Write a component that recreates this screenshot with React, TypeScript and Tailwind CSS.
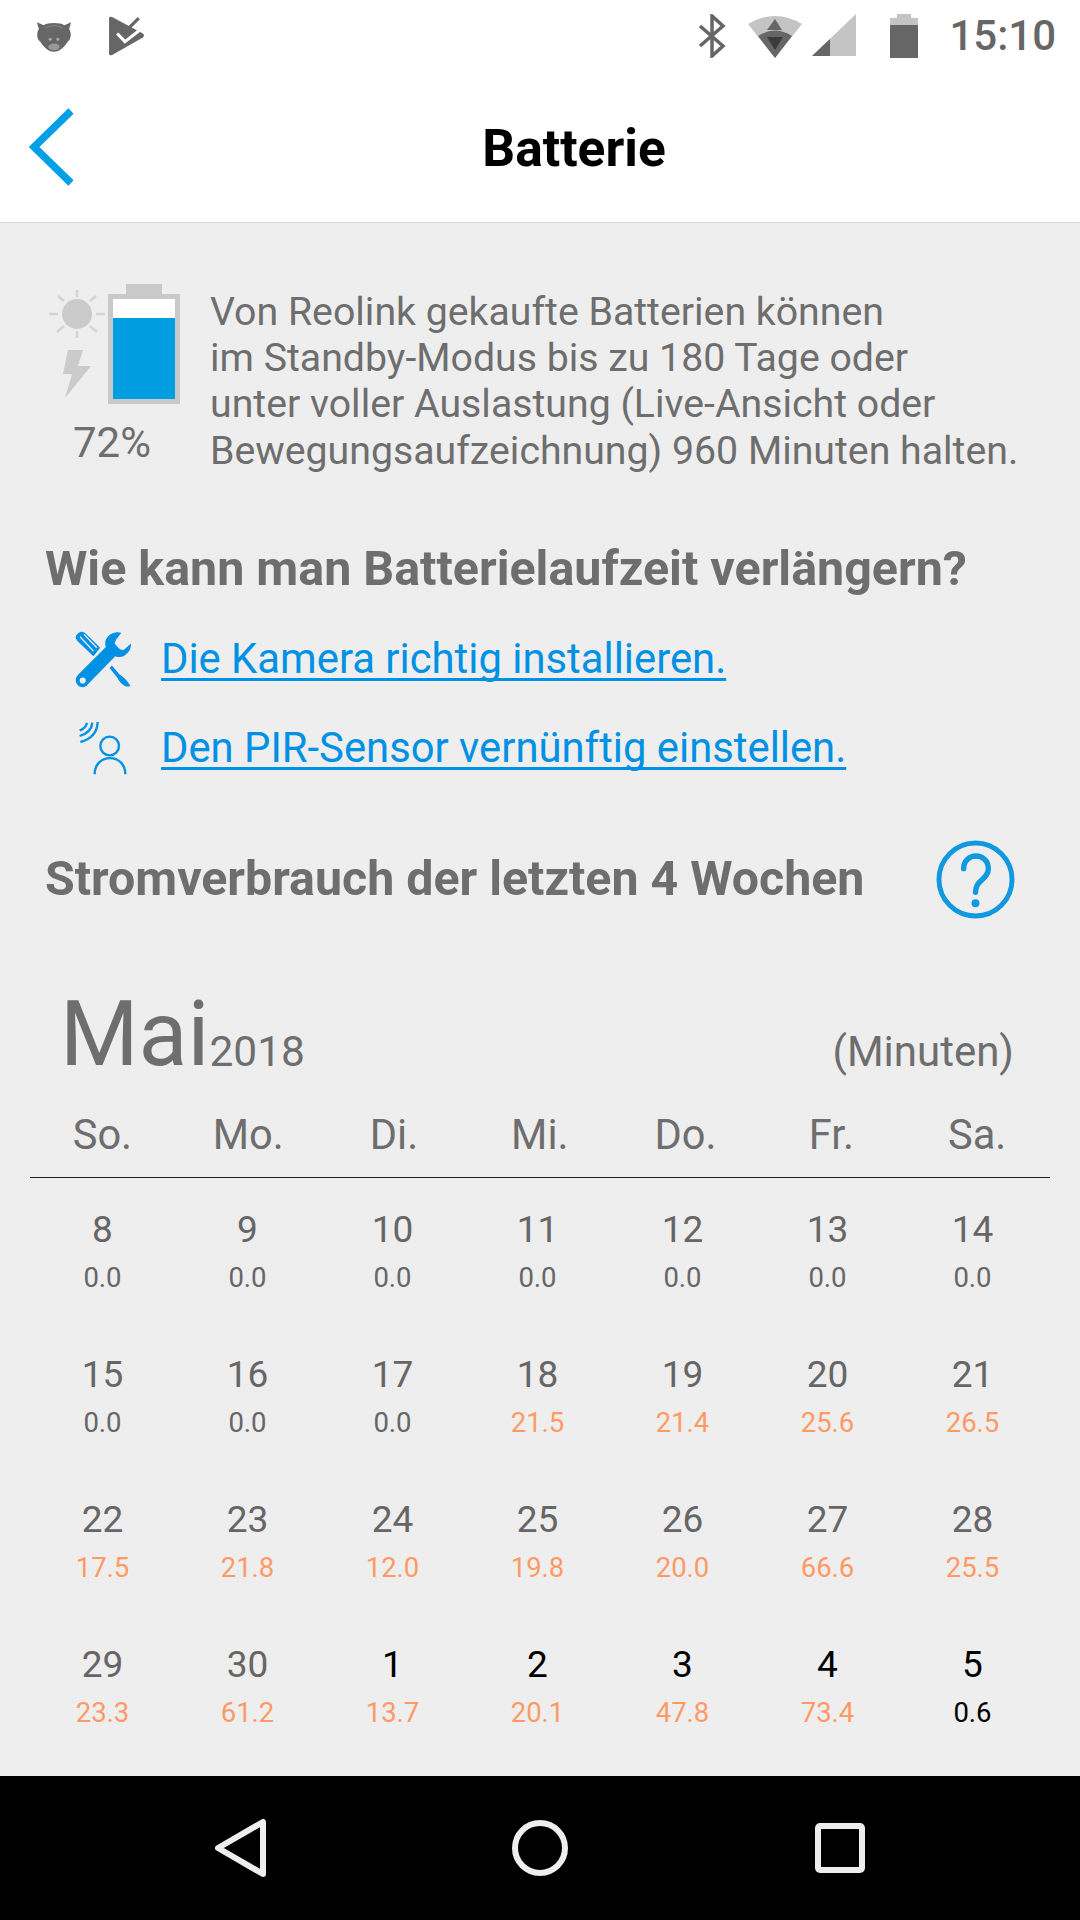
const weekDays = ['So.', 'Mo.', 'Di.', 'Mi.', 'Do.', 'Fr.', 'Sa.'];

// day, minutes
const weeks: [number, string][][] = [
  [[8, '0.0'], [9, '0.0'], [10, '0.0'], [11, '0.0'], [12, '0.0'], [13, '0.0'], [14, '0.0']],
  [[15, '0.0'], [16, '0.0'], [17, '0.0'], [18, '21.5'], [19, '21.4'], [20, '25.6'], [21, '26.5']],
  [[22, '17.5'], [23, '21.8'], [24, '12.0'], [25, '19.8'], [26, '20.0'], [27, '66.6'], [28, '25.5']],
  [[29, '23.3'], [30, '61.2'], [1, '13.7'], [2, '20.1'], [3, '47.8'], [4, '73.4'], [5, '0.6']],
];

function StatusBar() {
  return (
    <div className="flex h-[72px] items-center justify-between bg-white pl-[36px] pr-[24px]">
      <div className="flex items-center gap-[37px]">
        <svg width="36" height="33" viewBox="0 0 38 34">
          <path d="M1 2 L8 5 C12 2 26 2 30 5 L37 2 L35 9 C38 14 37 20 33 23 C30 28 25 33 19 33 C13 33 8 28 5 23 C1 20 0 14 3 9 Z" fill="#666666" />
          <path d="M10 8 Q19 3 28 8" fill="none" stroke="#8a8a8a" strokeWidth="1" />
          <ellipse cx="19" cy="28" rx="6" ry="3.5" fill="#999999" />
          <circle cx="15" cy="20" r="1.6" fill="#aaaaaa" />
          <circle cx="23" cy="20" r="1.6" fill="#aaaaaa" />
        </svg>
        <svg width="36" height="40" viewBox="0 0 35 39">
          <path d="M0 2 Q0 0 3 1 L33 17 Q35 19 33 21 L3 38 Q0 39 0 37 Z" fill="#666666" />
          <path d="M15 16 L29 2" fill="none" stroke="#666666" strokeWidth="3" />
          <path d="M12 9 L16 12" fill="none" stroke="#ffffff" strokeWidth="0" />
          <path d="M8 17 L15.5 25 L31 13" fill="none" stroke="#ffffff" strokeWidth="3" />
        </svg>
      </div>
      <div className="flex items-center">
        <svg width="28" height="44" viewBox="0 0 28 44" className="mr-[22px]">
          <path d="M2 32 L25 12 L14 2 L14 42 L25 32 L2 12" fill="none" stroke="#666666" strokeWidth="3.5" />
        </svg>
        <svg width="54" height="44" viewBox="0 0 54 44" className="mr-[10px]">
          <path d="M0 10 Q27 -6 54 10 L27 44 Z" fill="#c4c4c4" />
          <path d="M10 22 Q27 11 44 22 L27 44 Z" fill="#666666" />
          <path d="M27 5 L34 16 L19 16 Z" fill="#666666" />
          <path d="M19 23 L35 23 L27 36 Z" fill="#3a3a3a" />
        </svg>
        <svg width="44" height="44" viewBox="0 0 44 44" className="mr-[34px]">
          <path d="M44 0 L44 42 L0 42 Z" fill="#c4c4c4" />
          <path d="M18 25 L18 42 L0 42 Z" fill="#666666" />
        </svg>
        <svg width="28" height="44" viewBox="0 0 28 44" className="mr-[31px]">
          <path d="M7 0 H21 V4 H28 V12 H0 V4 H7 Z" fill="#c4c4c4" />
          <rect x="0" y="11" width="28" height="33" fill="#666666" />
        </svg>
        <span className="text-[42px] font-medium leading-none text-[#666666]">15:10</span>
      </div>
    </div>
  );
}

function BatteryGraphic() {
  return (
    <div className="flex w-[132px] flex-col">
      <div className="flex items-end">
        <div className="flex w-[60px] flex-col items-center pb-[6px] pr-[2px]">
          <svg width="56" height="48" viewBox="0 0 56 48" className="mb-[12px]">
            <circle cx="28" cy="24" r="15" fill="#cbcbcb" />
            <path d="M28 0 V7 M28 41 V48 M0 24 H9 M47 24 H56 M9 6 L15 11 M47 6 L41 11 M8 42 L15 36 M48 42 L41 36" stroke="#d4d4d4" strokeWidth="2.5" />
          </svg>
          <svg width="29" height="48" viewBox="0 0 29 48">
            <path d="M5 0 L20 0 L15 16 L28 16 L2 48 L9 24 L0 24 Z" fill="#cbcbcb" />
          </svg>
        </div>
        <div className="flex flex-col items-center">
          <div className="h-[10px] w-[36px] bg-[#c9c9c9]" />
          <div className="flex h-[110px] w-[72px] flex-col border-[5px] border-[#c9c9c9] bg-white">
            <div className="mt-[19px] flex-1 bg-[#009de0]" />
          </div>
        </div>
      </div>
      <span className="mt-[18px] pr-[4px] text-center text-[42px] leading-none text-[#6e6e6e]">72%</span>
    </div>
  );
}

export default function App() {
  return (
    <div className="flex h-[1920px] w-[1080px] flex-col overflow-hidden bg-[#eeeeee] font-['Roboto',sans-serif]">
      <StatusBar />

      {/* Header */}
      <header className="relative flex h-[151px] items-center justify-center border-b border-[#d8d8d8] bg-white pl-[68px]">
        <svg width="48" height="78" viewBox="0 0 48 78" className="absolute left-[29px] top-[36px]">
          <path d="M42 3 L5 39 L42 75" fill="none" stroke="#00a0e6" strokeWidth="7.5" />
        </svg>
        <h1 className="mt-[3px] text-[51.5px] font-bold text-black">Batterie</h1>
      </header>

      <main className="flex flex-1 flex-col">
        {/* Battery info */}
        <section className="flex pl-[48px] pt-[61px]">
          <BatteryGraphic />
          <p className="ml-[30px] mt-[5px] whitespace-nowrap text-[39.25px] leading-[46.2px] text-[#6e6e6e]">
            Von Reolink gekaufte Batterien können
            <br />
            im Standby-Modus bis zu 180 Tage oder
            <br />
            unter voller Auslastung (Live-Ansicht oder
            <br />
            Bewegungsaufzeichnung) 960 Minuten halten.
          </p>
        </section>

        <h2 className="ml-[45px] mt-[66px] text-[48.4px] font-bold leading-[58px] text-[#6e6e6e]">Wie kann man Batterielaufzeit verlängern?</h2>

        <div className="mt-[33px] flex items-center pl-[75px]">
          <svg width="57" height="57" viewBox="45 55 170 170">
            <path d="M47 75 Q47 65 60 58 Q70 55 76 62 L120 105 L100 130 L52 85 Z" fill="#0090e4" />
            <path d="M60 72 L100 115 M72 65 L110 105" stroke="#eeeeee" strokeWidth="4" />
            <path d="M183 60 Q160 55 145 70 Q130 85 137 103 L55 185 Q45 195 48 208 Q55 225 72 222 Q80 220 85 212 L165 130 Q185 138 200 122 Q213 110 212 92 L190 112 Q178 112 172 103 L163 92 Q165 82 172 75 Z" fill="#0090e4" />
            <circle cx="68" cy="203" r="9" fill="#eeeeee" />
            <path d="M155 158 L178 185 Q195 195 210 218 Q205 222 195 220 Q178 210 172 195 L148 165 Z" fill="#0090e4" />
          </svg>
          <a className="ml-[29px] text-[41.8px] leading-[52px] text-[#0090e4] underline decoration-[3px] underline-offset-[5px] [text-decoration-skip-ink:none]">Die Kamera richtig installieren.</a>
        </div>

        <div className="mt-[33px] flex items-center pl-[78px]">
          <svg width="50" height="55" viewBox="55 320 150 165" className="mr-[33px]">
            <g fill="none" stroke="#0090e4" strokeWidth="7">
              <path d="M62 383 Q112 370 114 323" />
              <path d="M60 365 Q95 355 98 325" />
              <path d="M60 348 Q78 342 82 325" />
              <circle cx="150" cy="395" r="28" />
              <path d="M105 480 C105 415 197 415 197 480" />
            </g>
          </svg>
          <a className="text-[41.8px] leading-[52px] text-[#0090e4] underline decoration-[3px] underline-offset-[5px] [text-decoration-skip-ink:none]">Den PIR-Sensor vernünftig einstellen.</a>
        </div>

        <div className="mt-[64px] flex items-center justify-between pl-[45px] pr-[65px]">
          <h2 className="text-[48.3px] font-bold leading-[58px] text-[#6e6e6e]">Stromverbrauch der letzten 4 Wochen</h2>
          <svg width="79" height="79" viewBox="0 0 80 80">
            <circle cx="40" cy="40" r="37" fill="none" stroke="#1199e0" strokeWidth="5" />
            <path d="M28 29 C28 12 53 12 53 29 C53 40 40 40 40 53" fill="none" stroke="#1199e0" strokeWidth="5.5" strokeLinecap="round" />
            <circle cx="40" cy="64" r="4" fill="#1199e0" />
          </svg>
        </div>

        {/* Calendar */}
        <div className="mt-[70px] flex items-end justify-between pl-[60px] pr-[66px]">
          <div className="flex items-end">
            <span className="text-[90px] leading-[92px] text-[#6e6e6e]">Mai</span>
            <span className="mb-[3px] text-[42.5px] leading-[52px] text-[#6e6e6e]">2018</span>
          </div>
          <span className="mb-[3px] text-[42px] leading-[52px] text-[#6e6e6e]">(Minuten)</span>
        </div>

        <div className="mx-[30px] mt-[31px] grid grid-cols-[repeat(7,145.8px)] border-b border-[#222222] pb-[19px]">
          {weekDays.map((d) => (
            <span key={d} className="pr-[1px] text-center text-[41.6px] leading-[46px] text-[#6e6e6e]">{d}</span>
          ))}
        </div>

        <div className="mx-[30px] mt-[32px] flex flex-col gap-[58px]">
          {weeks.map((week, w) => (
            <div key={w} className="grid grid-cols-[repeat(7,145px)]">
              {week.map(([day, minutes], i) => {
                const isMay = w === 3 && i >= 2;
                const isActive = minutes !== '0.0' && minutes !== '0.6';
                return (
                  <div key={day} className="flex flex-col items-center">
                    <span className={isMay ? 'text-[37px] leading-[40px] text-black' : 'text-[37px] leading-[40px] text-[#666666]'}>{day}</span>
                    <span
                      className={
                        isActive
                          ? 'mt-[8px] text-[27.5px] leading-[39px] text-[#ff9a66]'
                          : minutes === '0.6'
                            ? 'mt-[8px] text-[27.5px] leading-[39px] text-black'
                            : 'mt-[8px] text-[27.5px] leading-[39px] text-[#666666]'
                      }
                    >
                      {minutes}
                    </span>
                  </div>
                );
              })}
            </div>
          ))}
        </div>
      </main>

      {/* Nav bar */}
      <nav className="relative flex h-[144px] shrink-0 items-center bg-black">
        <svg width="54" height="60" viewBox="0 0 54 60" className="ml-[214px]">
          <path d="M49 4 V56 L4 30 Z" fill="none" stroke="#eeeeee" strokeWidth="6" strokeLinejoin="round" />
        </svg>
        <svg width="56" height="56" viewBox="0 0 56 56" className="ml-[244px]">
          <circle cx="28" cy="28" r="25" fill="none" stroke="#eeeeee" strokeWidth="6" />
        </svg>
        <svg width="50" height="50" viewBox="0 0 50 50" className="ml-[247px]">
          <rect x="3" y="3" width="44" height="44" rx="2" fill="none" stroke="#eeeeee" strokeWidth="6" />
        </svg>
      </nav>
    </div>
  );
}
